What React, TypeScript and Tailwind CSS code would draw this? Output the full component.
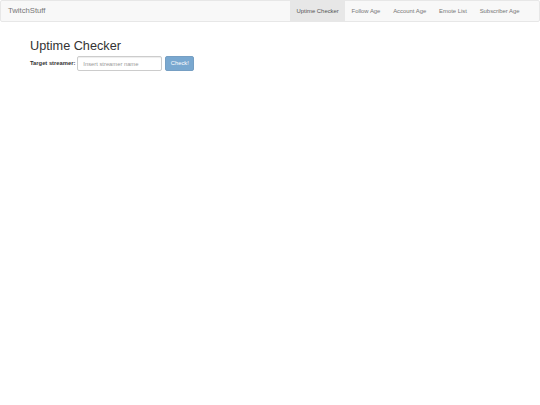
import React from 'react';

const links = ['Uptime Checker', 'Follow Age', 'Account Age', 'Emote List', 'Subscriber Age'];

export default function App() {
  return (
    <div className="min-h-[405px] bg-white font-['Liberation_Sans',Arial,sans-serif] text-[#333]">
      <nav className="flex h-[22px] items-stretch justify-between rounded-[2px] border border-[#e7e7e7] bg-[#f8f8f8]">
        <a className="flex items-center pl-[7px] text-[7.7px] text-[#777]">TwitchStuff</a>
        <ul className="mr-[13px] flex items-stretch">
          {links.map((l, i) => (
            <li
              key={l}
              className={`flex items-center px-[6.4px] text-[5.9px] ${i === 0 ? 'bg-[#e7e7e7] text-[#555]' : 'text-[#777]'}`}
            >
              {l}
            </li>
          ))}
        </ul>
      </nav>
      <div className="px-[30px]">
        <h1 className="mt-[16px] mb-[2px] text-[12.7px] leading-[16px] font-normal text-[#333]">Uptime Checker</h1>
        <div className="flex items-center gap-[2px]">
          <label className="text-[5.8px] font-bold text-[#333]">Target streamer:</label>
          <input
            className="h-[15px] w-[85px] rounded-[2px] border border-[#ccc] px-[5px] text-[5.8px] shadow-[inset_0_1px_1px_rgba(0,0,0,0.075)] placeholder:text-[#999]"
            placeholder="Insert streamer name"
          />
          <button className="ml-[1px] h-[15px] w-[29px] rounded-[2px] border border-[#2e6da4] bg-[#337ab7] text-[5.8px] text-white opacity-65">
            Check!
          </button>
        </div>
      </div>
    </div>
  );
}
